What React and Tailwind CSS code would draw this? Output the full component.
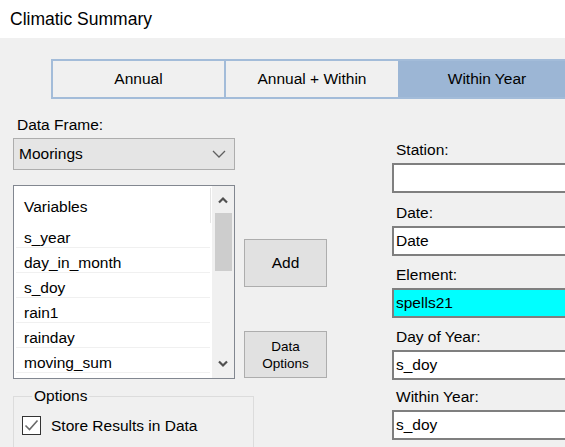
import React from "react";

const font = { fontFamily: '"Liberation Sans", Arial, sans-serif' };

function ChevronDown({ className }) {
  return (
    <svg className={className} width="14" height="8" viewBox="0 0 14 8" fill="none">
      <path d="M1 1 L7 7 L13 1" stroke="#606060" strokeWidth="1.3" />
    </svg>
  );
}

function SmallArrow({ up }) {
  return (
    <svg width="12" height="8" viewBox="0 0 12 8" fill="none">
      <path
        d={up ? "M2 6.5 L6 2.5 L10 6.5" : "M2 1.5 L6 5.5 L10 1.5"}
        stroke="#505050"
        strokeWidth="2.2"
      />
    </svg>
  );
}

function Field({ label, value, cyan, mt }) {
  return (
    <div className={`flex flex-col shrink-0 ${mt}`}>
      <div className="pl-[4px] h-[20px] leading-[20px] text-[15.5px] text-black">{label}</div>
      <div
        className={`mt-[3px] h-[30px] w-[220px] border-2 border-[#7f7f7f] pl-[2px] flex items-center text-[15.5px] text-black ${
          cyan ? "bg-[#00ffff]" : "bg-white"
        }`}
      >
        {value}
      </div>
    </div>
  );
}

const vars = ["s_year", "day_in_month", "s_doy", "rain1", "rainday", "moving_sum"];

export default function App() {
  return (
    <div style={font} className="w-[565px] h-[447px] overflow-hidden flex flex-col bg-[#f0f0f0] text-black">
      <div className="h-[38px] bg-white flex items-center pl-[10px] text-[17.5px] shrink-0">
        Climatic Summary
      </div>

      <div className="mt-[21px] ml-[51px] flex h-[40px] w-[527px] shrink-0 border-2 border-[#a3bcd9] bg-[#f0f0f0] text-[15.5px]">
        <div className="w-[173px] shrink-0 flex items-center justify-center border-r-2 border-[#a3bcd9]">Annual</div>
        <div className="w-[172px] shrink-0 flex items-center justify-center">Annual + Within</div>
        <div className="flex-1 flex items-center justify-center bg-[#9cb6d5]">Within Year</div>
      </div>

      <div className="flex flex-1">
        {/* Left column */}
        <div className="flex flex-col ml-[13px] w-[222px] shrink-0">
          <div className="mt-[16px] pl-[4px] h-[20px] leading-[20px] text-[15.5px]">Data Frame:</div>
          <div className="mt-[3px] h-[32px] border border-[#adadad] bg-[#e5e5e5] flex items-center justify-between pl-[5px] pr-[8px] text-[15.5px]">
            <span>Moorings</span>
            <ChevronDown />
          </div>

          <div className="mt-[15px] h-[194px] border border-[#828790] bg-white flex">
            <div className="flex-1 flex flex-col">
              <div className="h-[37px] shrink-0 flex items-center pl-[10px] pt-[4px] text-[15.5px]">
                <span>Variables</span>
                <div className="ml-auto mr-[1px] w-px h-[35px] bg-[#e5e5e5] self-start -mt-[2px]" />
              </div>
              {vars.map((v) => (
                <div
                  key={v}
                  className="h-[25px] shrink-0 flex items-center pl-[8px] pt-[5px] mx-[2px] border-b border-[#f0f0f0] text-[15.5px]"
                >
                  <span>{v}</span>
                </div>
              ))}
            </div>
            <div className="w-[22px] bg-[#f0f0f0] flex flex-col items-center">
              <div className="h-[27px] w-full flex items-center justify-center">
                <SmallArrow up />
              </div>
              <div className="w-[17px] h-[58px] bg-[#cdcdcd]" />
              <div className="flex-1" />
              <div className="h-[28px] w-full flex items-center justify-center">
                <SmallArrow />
              </div>
            </div>
          </div>

          <fieldset className="mt-[8px] border border-[#dcdcdc] h-[80px] w-[241px] px-[8px]">
            <legend className="ml-[10px] px-[2px] text-[15.5px] leading-[18px]">Options</legend>
            <label className="flex items-center mt-[9px] text-[15.5px]">
              <span className="w-[19px] h-[19px] border border-[#333333] bg-white flex items-center justify-center">
                <svg width="15" height="13" viewBox="0 0 15 13" fill="none">
                  <path d="M1.5 6.5 L5.5 10.5 L13.5 1.5" stroke="#6a6a6a" strokeWidth="1.6" />
                </svg>
              </span>
              <span className="ml-[10px]">Store Results in Data</span>
            </label>
          </fieldset>
        </div>

        {/* Middle buttons */}
        <div className="flex flex-col ml-[9px] w-[83px] shrink-0">
          <div className="mt-[140px] h-[48px] border border-[#adadad] bg-[#e1e1e1] flex items-center justify-center text-[15.5px]">
            Add
          </div>
          <div className="mt-[44px] h-[47px] border border-[#adadad] bg-[#e1e1e1] flex flex-col items-center justify-center text-[13.5px] leading-[17px]">
            <span>Data</span>
            <span>Options</span>
          </div>
        </div>

        {/* Right column */}
        <div className="flex flex-col ml-[65px] shrink-0">
          <Field label="Station:" value="" mt="mt-[41px]" />
          <Field label="Date:" value="Date" mt="mt-[10px]" />
          <Field label="Element:" value="spells21" cyan mt="mt-[9px]" />
          <Field label="Day of Year:" value="s_doy" mt="mt-[9px]" />
          <Field label="Within Year:" value="s_doy" mt="mt-[7px]" />
        </div>
      </div>
    </div>
  );
}
